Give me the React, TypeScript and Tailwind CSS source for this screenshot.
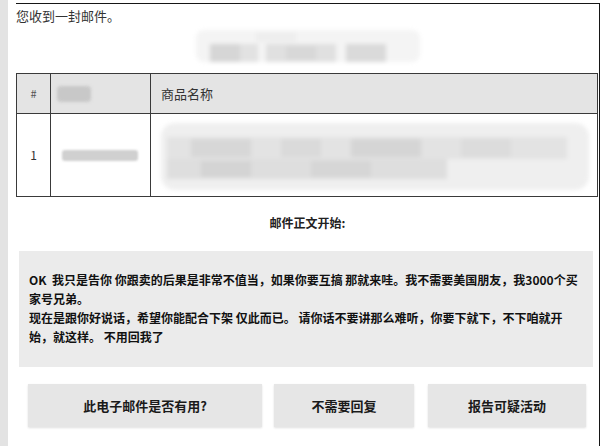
import React from "react";

const font = { fontFamily: '"Noto Sans CJK SC", "Noto Sans", sans-serif' };

function TopBlur() {
  return (
    <div className="mx-auto mt-[5px] h-[32px] w-[224px] rounded-[8px] bg-[#f4f4f4] blur-[2px] relative overflow-hidden">
      <div className="absolute left-[14px] top-[14px] h-[18px] w-[30px] bg-[#d6d6d6]" />
      <div className="absolute left-[44px] top-[14px] h-[18px] w-[18px] bg-[#e2e2e2]" />
      <div className="absolute left-[70px] top-[14px] h-[18px] w-[70px] bg-[#e0e0e0]" />
      <div className="absolute left-[90px] top-[16px] h-[14px] w-[30px] bg-[#d8d8d8]" />
      <div className="absolute left-[150px] top-[14px] h-[18px] w-[40px] bg-[#dadada]" />
      <div className="absolute left-[60px] top-[2px] h-[10px] w-[40px] bg-[#eeeeee]" />
    </div>
  );
}

function CellBlur() {
  return (
    <div className="relative ml-[10px] mt-[9px] h-[67px] w-[428px] rounded-[14px] bg-[#efefef] blur-[2px] overflow-hidden">
      <div className="absolute left-[6px] top-[14px] h-[22px] w-[400px] bg-[#e3e3e3]" />
      <div className="absolute left-[30px] top-[16px] h-[18px] w-[60px] bg-[#d7d7d7]" />
      <div className="absolute left-[120px] top-[16px] h-[18px] w-[40px] bg-[#dadada]" />
      <div className="absolute left-[190px] top-[16px] h-[18px] w-[70px] bg-[#d5d5d5]" />
      <div className="absolute left-[300px] top-[16px] h-[18px] w-[50px] bg-[#dcdcdc]" />
      <div className="absolute left-[6px] top-[36px] h-[20px] w-[280px] bg-[#dedede]" />
      <div className="absolute left-[40px] top-[38px] h-[16px] w-[50px] bg-[#d4d4d4]" />
      <div className="absolute left-[150px] top-[38px] h-[16px] w-[60px] bg-[#d6d6d6]" />
    </div>
  );
}

export default function App() {
  return (
    <div className="relative flex h-[446px] w-[604px] overflow-hidden bg-white text-[#222]" style={font}>
      <div className="h-full w-[8px] shrink-0 bg-[#e3e3e3]" />
      <div className="ml-[8px] mt-[3px] flex h-[443px] w-[584px] shrink-0 flex-col border-t border-r border-[#161616]">
        <div className="pt-[3px] text-[13px] leading-[18px] text-[#333]">您收到一封邮件。</div>
        <TopBlur />
        <div className="mt-[11px] w-[582px] border border-[#3a3a3a] text-[13px] text-[#333]">
          <div className="flex h-[40px] border-b border-[#3a3a3a] bg-[#e4e4e4]">
            <div className="flex w-[34px] items-center justify-center border-r border-[#3a3a3a] text-[11px] text-[#555]">#</div>
            <div className="flex w-[100px] items-center border-r border-[#3a3a3a]">
              <div className="ml-[6px] h-[16px] w-[34px] rounded-[4px] bg-[#c8c8c8] blur-[1.5px]" />
            </div>
            <div className="flex flex-1 items-center pl-[10px]">商品名称</div>
          </div>
          <div className="flex h-[82px]">
            <div className="flex w-[34px] items-center justify-center border-r border-[#3a3a3a] text-[12px]">1</div>
            <div className="flex w-[100px] items-center border-r border-[#3a3a3a]">
              <div className="ml-[11px] h-[11px] w-[76px] rounded-[3px] bg-[#d0d0d0] blur-[1px]" />
            </div>
            <div className="flex-1">
              <CellBlur />
            </div>
          </div>
        </div>
        <div className="mt-[17px] text-center text-[12px] font-bold leading-[18px] text-[#222]">邮件正文开始:</div>
        <div className="ml-[3px] mt-[19px] h-[116px] w-[574px] bg-[#ebebeb] pl-[10px] pr-[8px] pt-[19px] text-[12px] font-bold leading-[19px] text-[#111]">
          <p>OK&nbsp; 我只是告你 你跟卖的后果是非常不值当，如果你要互搞 那就来哇。我不需要美国朋友，我3000个买家号兄弟。</p>
          <p>现在是跟你好说话，希望你能配合下架 仅此而已。 请你话不要讲那么难听，你要下就下，不下咱就开始，就这样。 不用回我了</p>
        </div>
        <div className="ml-[12px] mt-[17px] flex gap-[12px] text-[13px] font-bold text-[#1a1a1a]">
          <div className="flex h-[43px] w-[234px] items-center justify-center bg-[#e6e6e6] shadow-[0_1px_2px_rgba(0,0,0,0.12)]">此电子邮件是否有用?</div>
          <div className="flex h-[43px] w-[140px] items-center justify-center bg-[#e6e6e6] shadow-[0_1px_2px_rgba(0,0,0,0.12)]">不需要回复</div>
          <div className="ml-[2px] flex h-[43px] w-[158px] items-center justify-center bg-[#e6e6e6] shadow-[0_1px_2px_rgba(0,0,0,0.12)]">报告可疑活动</div>
        </div>
      </div>
    </div>
  );
}
